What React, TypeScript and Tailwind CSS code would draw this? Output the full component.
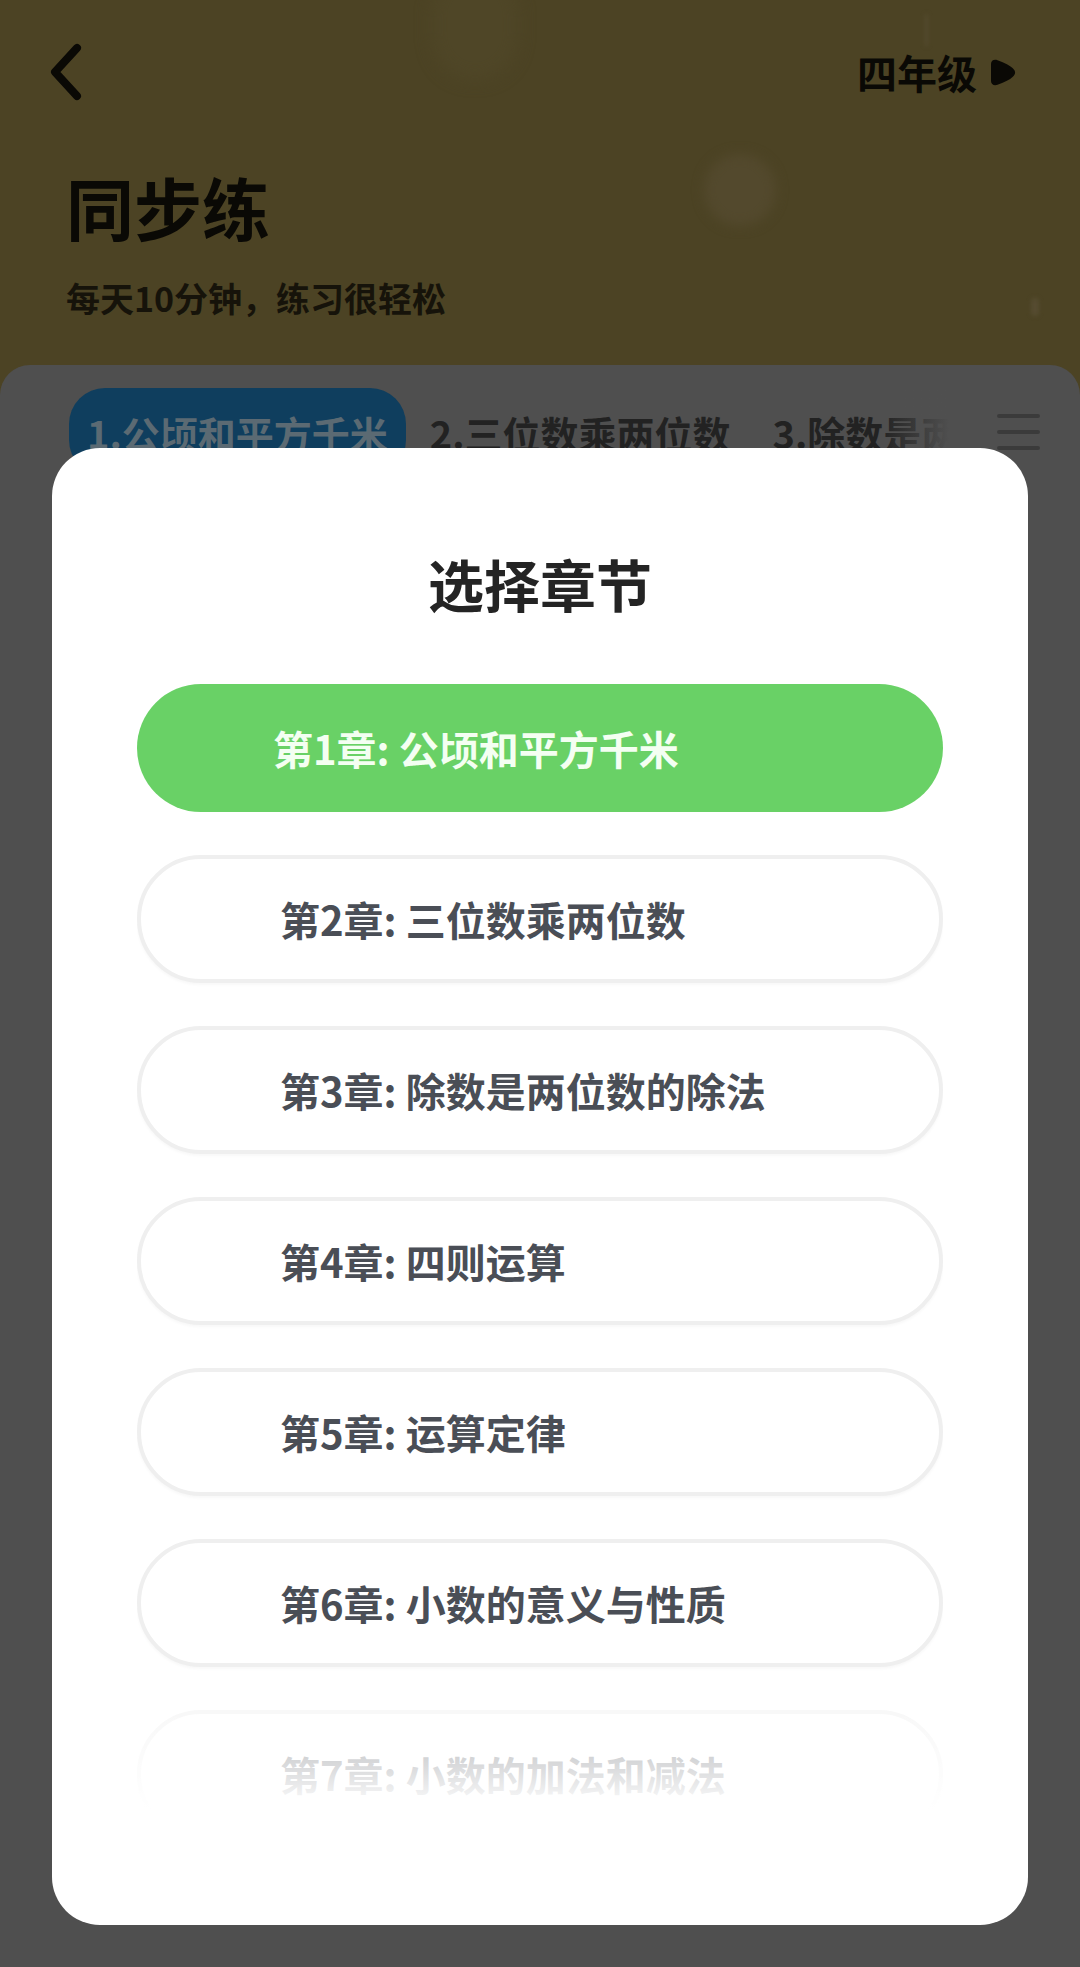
import React from "react";

const chapters = [
  "第1章: 公顷和平方千米",
  "第2章: 三位数乘两位数",
  "第3章: 除数是两位数的除法",
  "第4章: 四则运算",
  "第5章: 运算定律",
  "第6章: 小数的意义与性质",
  "第7章: 小数的加法和减法",
];

export default function App() {
  return (
    <div className="relative w-[1080px] h-[1967px] overflow-hidden bg-[#4c4324] font-['Noto_Sans_CJK_SC','Noto_Sans',sans-serif]">
      {/* header decorations */}
      <div className="absolute left-[432px] top-[-30px] w-[86px] h-[110px] rounded-full bg-[#4f4627] blur-[8px]" />
      <div className="absolute left-[704px] top-[154px] w-[72px] h-[72px] rounded-full bg-[#53492d] blur-[6px]" />
      <div className="absolute left-[925px] top-[14px] w-[3px] h-[32px] rounded-full bg-[#554b30] blur-[2px]" />
      <div className="absolute left-[1031px] top-[298px] w-[8px] h-[18px] rounded-full bg-[#564c31] blur-[2px]" />

      <header className="relative px-[50px] pt-[42px]">
        <div className="flex h-[60px] items-center justify-between">
          <svg width="36" height="60" viewBox="0 0 36 60" fill="none" className="-ml-[2px]">
            <path d="M29 6 L7 30 L29 54" stroke="#0a0905" strokeWidth="8" strokeLinecap="round" strokeLinejoin="round" />
          </svg>
          <div className="mr-[14px] flex items-center">
            <span className="text-[40px] leading-[48px] font-bold text-[#0a0905]">四年级</span>
            <svg width="28" height="27" viewBox="0 0 28 27" className="ml-[11px]">
              <path d="M3 5 C3 1.5 6 0 9.5 1.2 C17 4 22 6.5 24.5 9 C28 12 28 15 24.5 18 C22 20.5 17 23 9.5 25.8 C6 27 3 25.5 3 22 Z" fill="#0a0905" />
            </svg>
          </div>
        </div>
        <h1 className="mt-[72px] pl-[16px] h-[66px] text-[68px] leading-[66px] font-bold text-[#0a0905]">同步练</h1>
        <p className="mt-[38px] pl-[16px] h-[40px] text-[34px] leading-[40px] font-bold text-[#16130a]">每天10分钟，练习很轻松</p>
      </header>

      <main className="relative mt-[47px] h-[1602px] rounded-t-[30px] bg-[#4f4f4f] pt-[23px]">
        <div className="flex items-center pl-[69px]">
          <div className="relative flex w-[880px] items-center gap-[6px] overflow-hidden">
            <div className="flex h-[88px] shrink-0 items-center rounded-[36px] bg-[#0f3e5e] px-[18px] text-[38px] font-bold text-[#5b6a73]">
              1.公顷和平方千米
            </div>
            <div className="flex h-[88px] shrink-0 items-center px-[18px] text-[38px] font-bold text-[#222222]">
              2.三位数乘两位数
            </div>
            <div className="flex h-[88px] shrink-0 items-center px-[18px] text-[38px] font-bold text-[#222222]">
              3.除数是两位数的除法
            </div>
            <div className="absolute right-0 top-0 h-full w-[70px] bg-gradient-to-r from-[#4f4f4f00] to-[#4f4f4f]" />
          </div>
          <div className="ml-[48px] flex w-[43px] flex-col gap-[12px]">
            <div className="h-[4px] rounded-full bg-[#3b3b3b]" />
            <div className="h-[4px] rounded-full bg-[#3b3b3b]" />
            <div className="h-[4px] rounded-full bg-[#3b3b3b]" />
          </div>
        </div>
      </main>

      {/* modal */}
      <div className="absolute left-[52px] top-[448px] w-[976px] h-[1477px] rounded-[48px] bg-white pt-[103px]">
        <h2 className="h-[64px] text-center text-[56px] leading-[64px] font-bold text-[#242424]">选择章节</h2>
        <div className="relative mx-[85px] mt-[69px] h-[1151px] overflow-hidden">
          <div className="flex flex-col gap-[43px]">
            {chapters.map((c, i) =>
              i === 0 ? (
                <div
                  key={c}
                  className="flex h-[128px] shrink-0 items-center rounded-full bg-[#69d166] pl-[136px] text-[40px] font-bold text-[#f4fff2]"
                >
                  {c}
                </div>
              ) : (
                <div
                  key={c}
                  className="flex h-[128px] shrink-0 items-center rounded-full border-[4px] border-[#efefef] bg-white pl-[139px] text-[40px] font-bold text-[#4a4e56] shadow-[0_2px_3px_rgba(0,0,0,0.03)]"
                >
                  {c}
                </div>
              )
            )}
          </div>
          <div className="absolute left-0 right-0 top-[986px] bottom-0 bg-[linear-gradient(to_bottom,rgba(255,255,255,0)_0%,rgba(255,255,255,0.5)_15%,rgba(255,255,255,0.82)_62%,#ffffff_85%)]" />
        </div>
      </div>
    </div>
  );
}
